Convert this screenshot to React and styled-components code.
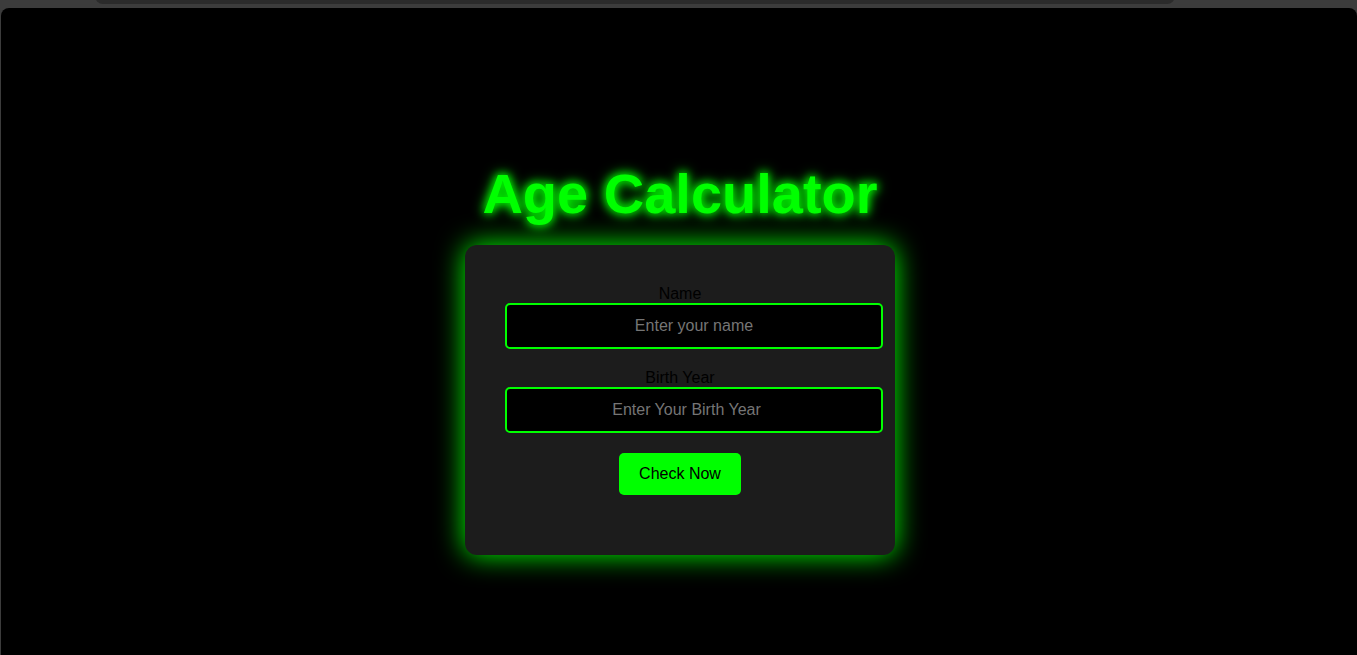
import React from "react";
import styled, { createGlobalStyle } from "styled-components";

const GlobalStyle = createGlobalStyle`
    html, body {
        margin: 0;
        padding: 0;
        background: #3c3c3c;
        font-family: "Liberation Sans", Arial, sans-serif;
    }
    * {
        box-sizing: content-box;
    }
`;

export default function App() {
    return (
        <>
            <GlobalStyle />
            <Frame>
                <TopBar>
                    <Tab />
                </TopBar>
                <Page>
                    <Title>Age Calculator</Title>
                    <Card>
                        <Field>
                            <label htmlFor="name">Name</label>
                            <input id="name" type="text" placeholder="Enter your name" />
                        </Field>
                        <Field>
                            <label htmlFor="year">Birth Year</label>
                            <input id="year" type="number" placeholder="Enter Your Birth Year" />
                        </Field>
                        <Button>Check Now</Button>
                    </Card>
                </Page>
            </Frame>
        </>
    );
}

const Frame = styled.div`
    width: 1357px;
    height: 655px;
    display: flex;
    flex-direction: column;
    background: #3c3c3c;
    overflow: hidden;
`;

const TopBar = styled.div`
    height: 8px;
    flex-shrink: 0;
    position: relative;
`;

const Tab = styled.div`
    position: absolute;
    left: 95px;
    width: 1080px;
    top: -6px;
    height: 10px;
    background: #2b2b2b;
    border-radius: 0 0 8px 8px;
`;

const Page = styled.div`
    flex: 1;
    margin-left: 1px;
    background: #000;
    border-radius: 8px 8px 0 0;
    display: flex;
    flex-direction: column;
    align-items: center;
    padding-top: 153px;
    padding-left: 2px;
`;

const Title = styled.h1`
    margin: 0 0 19px;
    font-size: 56px;
    font-weight: bold;
    color: #00ff00;
    text-shadow: 0 0 8px #00ff00, 0 0 14px #00ff00;
`;

const Card = styled.div`
    width: 350px;
    padding: 40px 40px 60px;
    background: #1c1c1c;
    border-radius: 12px;
    box-shadow: 0 0 28px #00ff00;
    display: flex;
    flex-direction: column;
    align-items: center;
`;

const Field = styled.div`
    width: 100%;
    margin-bottom: 20px;
    text-align: center;

    label {
        display: block;
        color: #000;
        font-size: 16px;
    }
    input {
        display: block;
        width: 100%;
        padding: 12px;
        border: 2px solid #00ff00;
        border-radius: 5px;
        background: #000;
        color: #fff;
        font-family: "Liberation Sans", Arial, sans-serif;
        font-size: 16px;
        line-height: normal;
        text-align: center;
        outline: none;
    }
    input::placeholder {
        color: #757575;
    }
`;

const Button = styled.button`
    padding: 12px 20px;
    border: none;
    border-radius: 5px;
    background: #00ff00;
    color: #000;
    font-family: "Liberation Sans", Arial, sans-serif;
    font-size: 16px;
    line-height: normal;
    cursor: pointer;
`;
